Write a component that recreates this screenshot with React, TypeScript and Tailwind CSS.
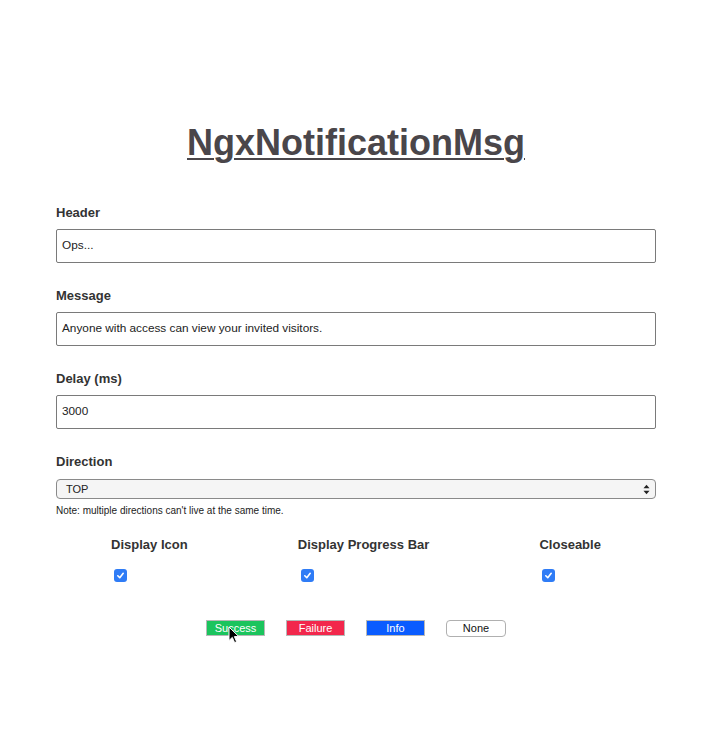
import React from "react";

function Field({ label, value }: { label: string; value: string }) {
  return (
    <div className="flex flex-col">
      <label className="text-[13px] leading-[15px] font-bold text-[#333]">{label}</label>
      <div className="mt-[9px] h-[34px] border border-[#7a7a7a] rounded-[2px] flex items-center px-[5px] text-[11.8px] text-[#222]">
        {value}
      </div>
    </div>
  );
}

function Check({ label }: { label: string }) {
  return (
    <div className="flex flex-col">
      <span className="text-[13px] leading-[15px] font-bold text-[#333]">{label}</span>
      <div className="mt-[17px] ml-[3px] w-[13px] h-[13px] rounded-[3px] bg-[#2f7cf6] flex items-center justify-center">
        <svg width="9" height="9" viewBox="0 0 10 10">
          <path d="M2 5.3 L4.2 7.4 L8 2.6" stroke="white" strokeWidth="1.8" fill="none" strokeLinecap="round" strokeLinejoin="round" />
        </svg>
      </div>
    </div>
  );
}

export default function App() {
  return (
    <div className="min-h-[746px] bg-white font-['Liberation_Sans',Arial,sans-serif] text-[#333]">
      <div className="w-[712px]">
        <div className="pt-[122px] flex justify-center">
          <h1 className="text-[36px] leading-[41px] font-bold underline decoration-[2px] underline-offset-[3px] text-[#4a464a]">
            NgxNotificationMsg
          </h1>
        </div>
        <div className="mx-[56px] mt-[42px] flex flex-col gap-[25px]">
          <Field label="Header" value="Ops..." />
          <Field label="Message" value="Anyone with access can view your invited visitors." />
          <Field label="Delay (ms)" value="3000" />
        </div>
        <div className="mx-[56px] mt-[25px] flex flex-col">
          <label className="text-[13px] leading-[15px] font-bold text-[#333]">Direction</label>
          <div className="mt-[10px] h-[20px] border border-[#8a8a8a] rounded-[4px] bg-[#f5f5f5] flex items-center justify-between pl-[9px] pr-[5px] text-[11px] text-[#222]">
            <span>TOP</span>
            <svg width="7" height="11" viewBox="0 0 7 11">
              <path d="M0.5 4.2 L3.5 0.8 L6.5 4.2 Z" fill="#222" />
              <path d="M0.5 6.8 L3.5 10.2 L6.5 6.8 Z" fill="#222" />
            </svg>
          </div>
          <p className="mt-[6px] text-[10px] leading-[11px] text-[#222]">
            Note: multiple directions can't live at the same time.
          </p>
        </div>
        <div className="mx-[56px] mt-[21px] flex justify-around">
          <Check label="Display Icon" />
          <Check label="Display Progress Bar" />
          <Check label="Closeable" />
        </div>
        <div className="mt-[38px] flex justify-center gap-[21px] text-[11px]">
          <div className="relative">
            <button className="w-[59px] h-[16px] border border-[#b8b8b8] bg-[#1bc45d] text-white leading-none flex items-center justify-center">
              Success
            </button>
            <svg className="absolute left-[22px] top-[6px]" width="12" height="18" viewBox="0 0 12 18">
              <path d="M1 1 L1 14.5 L4.3 11.4 L6.6 16.6 L8.6 15.7 L6.4 10.6 L10.8 10.6 Z" fill="#000" stroke="#fff" strokeWidth="1" strokeLinejoin="round" />
            </svg>
          </div>
          <button className="w-[59px] h-[16px] border border-[#b8b8b8] bg-[#f2274c] text-white leading-none flex items-center justify-center">
            Failure
          </button>
          <button className="w-[59px] h-[16px] border border-[#b8b8b8] bg-[#0a5cff] text-white leading-none flex items-center justify-center">
            Info
          </button>
          <button className="w-[60px] h-[17px] border border-[#b0b0b0] rounded-[4px] bg-white text-[#111] leading-none flex items-center justify-center">
            None
          </button>
        </div>
      </div>
    </div>
  );
}
